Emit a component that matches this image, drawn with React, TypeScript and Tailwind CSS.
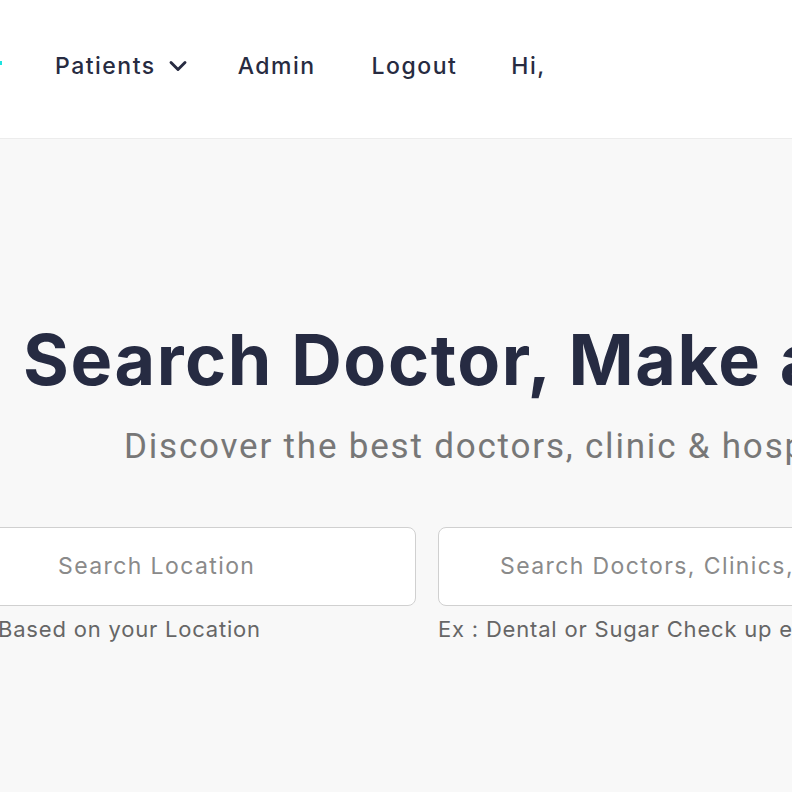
import { ChevronDown } from "lucide-react";

const poppins = { fontFamily: '"Inter", "Open Sans", sans-serif' };

function NavBar() {
  return (
    <header className="relative flex h-[139px] items-center border-b border-[#ececec] bg-white pb-[6px]">
      <span className="absolute left-0 top-[61px] h-[4px] w-[2px] bg-[#1ee3e0]" />
      <nav
        className="ml-[55px] flex items-center text-[23px] font-medium tracking-[1.5px] text-[#272b41]"
        style={poppins}
      >
        <div className="flex items-center gap-[8px]">
          <span>Patients</span>
          <ChevronDown className="h-[28px] w-[28px]" strokeWidth={2.5} />
        </div>
        <span className="ml-[46px]">Admin</span>
        <span className="ml-[56px]">Logout</span>
        <span className="ml-[54px]">Hi,</span>
      </nav>
    </header>
  );
}

function Banner() {
  return (
    <section className="h-[653px] overflow-hidden bg-[#f8f8f8]">
      <h1
        className="ml-[23px] mt-[186px] whitespace-nowrap text-[70px] leading-[70px] font-bold tracking-[1.6px] text-[#262b42]"
        style={poppins}
      >
        Search Doctor, Make an Appointment
      </h1>
      <p
        className="ml-[124px] mt-[30px] whitespace-nowrap text-[35px] leading-[44px] tracking-[1.8px] text-[#777]"
        style={{ fontFamily: "Roboto, sans-serif" }}
      >
        Discover the best doctors, clinic &amp; hospital the city nearest to you.
      </p>
      <div className="ml-[-20px] mt-[58px] flex gap-[22px]" style={poppins}>
        <div className="w-[436px] shrink-0">
          <div className="flex h-[79px] items-center whitespace-nowrap rounded-[8px] border border-[#d0d0d0] bg-white pl-[77px] text-[23px] tracking-[1.4px] text-[#8a8a8a]">
            Search Location
          </div>
          <p className="mt-[9px] ml-[18px] whitespace-nowrap text-[22px] leading-[28px] tracking-[0.8px] text-[#666]">
            Based on your Location
          </p>
        </div>
        <div className="w-[600px] shrink-0">
          <div className="flex h-[79px] items-center whitespace-nowrap rounded-[8px] border border-[#d0d0d0] bg-white pl-[61px] text-[23px] tracking-[1.4px] text-[#8a8a8a]">
            Search Doctors, Clinics, Hospitals, Diseases Etc
          </div>
          <p className="mt-[9px] whitespace-nowrap text-[22px] leading-[28px] tracking-[0.8px] text-[#666]">
            Ex : Dental or Sugar Check up etc
          </p>
        </div>
      </div>
    </section>
  );
}

export default function App() {
  return (
    <div className="h-[792px] w-[792px] overflow-hidden bg-[#f8f8f8]">
      <NavBar />
      <Banner />
    </div>
  );
}
